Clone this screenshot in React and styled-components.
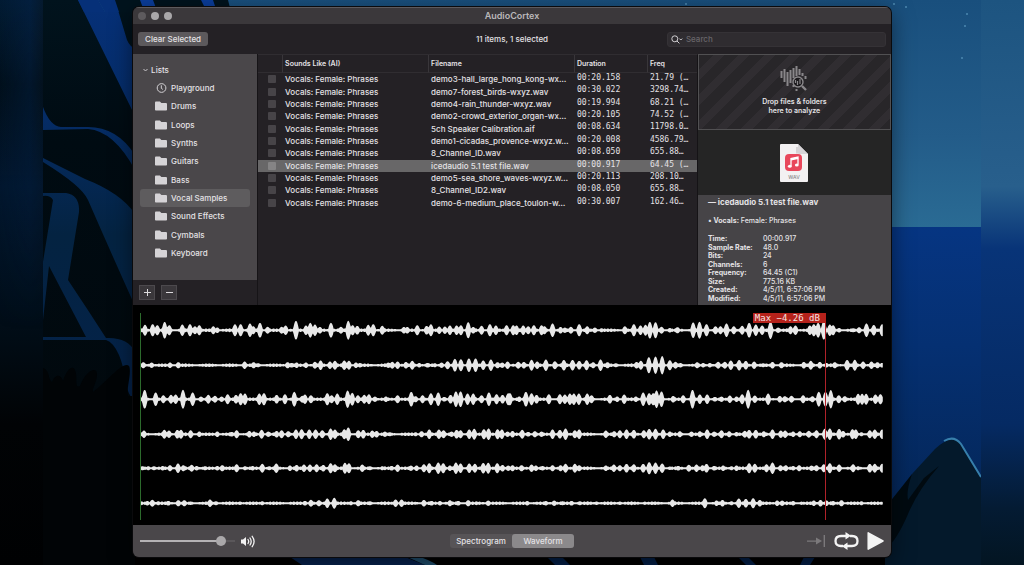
import React, { useState } from 'react';
import styled, { createGlobalStyle } from 'styled-components';
import { FaFolder } from 'react-icons/fa';

const GlobalStyle = createGlobalStyle`
  * { box-sizing: border-box; }
  body {
    margin: 0;
    background: #01060c;
    color: #e4e2e5;
    font-family: Inter, "Liberation Sans", sans-serif;
    font-size: 8px;
    line-height: 12px;
  }
  button, input { font: inherit; color: inherit; margin: 0; }
  button { border: 0; padding: 0; cursor: pointer; }
`;

const lists = ['Playground', 'Drums', 'Loops', 'Synths', 'Guitars', 'Bass', 'Vocal Samples', 'Sound Effects', 'Cymbals', 'Keyboard'];

const files = [
  ['demo3-hall_large_hong_kong-wx…', '00:20.158', '21.79 (…'],
  ['demo7-forest_birds-wxyz.wav', '00:30.022', '3298.74…'],
  ['demo4-rain_thunder-wxyz.wav', '00:19.994', '68.21 (…'],
  ['demo2-crowd_exterior_organ-wx…', '00:20.105', '74.52 (…'],
  ['5ch Speaker Calibration.aif', '00:08.634', '11798.0…'],
  ['demo1-cicadas_provence-wxyz.w…', '00:20.008', '4586.79…'],
  ['8_Channel_ID.wav', '00:08.050', '655.88…'],
  ['icedaudio 5.1 test file.wav', '00:00.917', '64.45 (…'],
  ['demo5-sea_shore_waves-wxyz.w…', '00:20.113', '208.10…'],
  ['8_Channel_ID2.wav', '00:08.050', '655.88…'],
  ['demo-6-medium_place_toulon-w…', '00:30.007', '162.46…'],
];

const details = [
  ['Time:', '00:00.917'],
  ['Sample Rate:', '48.0'],
  ['Bits:', '24'],
  ['Channels:', '6'],
  ['Frequency:', '64.45 (C1)'],
  ['Size:', '775.16 KB'],
  ['Created:', '4/5/11, 6:57:06 PM'],
  ['Modified:', '4/5/11, 6:57:06 PM'],
];

// peaks of each channel as "position:height", two halves per channel
const HALF = 1140;
const channels = [
  ['45:16 68:18 82:15 104:25 118:15 157:17 180:18 195:12 208:15 250:12 262:8 315:18 332:18 360:20 370:12 390:22 413:10 455:10 467:14 498:28 528:14 541:22 555:17 570:10 603:22 633:10 655:28 668:15 682:13 715:16 730:18 757:13 795:4 822:10 832:10 862:15 890:13 903:18 928:11 945:11 960:14 980:14 993:15 1015:24 1030:10 1055:13 1080:18 1098:14 1130:15',
    '10:15 20:14 40:14 55:12 72:15 95:15 104:12 128:20 152:10 165:8 183:10 208:18 232:12 255:8 275:6 345:12 372:18 392:14 407:16 420:25 437:24 455:10 480:7 503:9 550:23 569:25 590:18 617:12 632:12 650:20 672:12 697:13 718:22 738:17 757:14 782:26 805:8 842:12 857:14 900:14 912:18 925:22 942:28 960:17 970:15 988:7 1030:6 1048:9 1070:20 1092:16 1117:18'],
  ['40:9 65:8 120:8 145:9 238:5 290:4 344:11 371:9 385:6 440:4 473:9 485:7 500:8 528:8 555:10 572:14 600:11 615:13 643:14 657:13 678:8 690:7 775:8 787:10 803:11 828:10 847:13 868:7 893:7 915:6 935:8 953:12 975:19 993:18 1017:20 1037:20 1060:14 1083:17 1103:9 1117:8 1133:11',
    '25:10 42:10 65:16 82:11 108:17 135:12 162:16 188:16 208:13 230:15 250:9 272:17 293:9 318:6 380:10 393:13 417:24 437:26 457:27 480:15 497:10 512:7 562:9 580:7 600:7 625:10 645:10 663:14 688:16 708:13 733:11 760:6 788:10 815:9 882:10 903:13 930:10 950:7 975:9 1012:16 1035:16 1060:11 1085:11 1103:9 1117:7'],
  ['44:28 77:20 100:12 123:13 137:14 159:28 188:20 213:8 235:13 255:10 275:8 293:15 318:13 332:18 345:17 388:17 402:18 440:13 465:15 493:22 517:10 525:14 543:12 592:18 605:12 622:17 653:26 667:19 684:12 703:13 717:15 735:8 768:8 803:12 844:22 857:9 878:12 903:18 925:20 943:7 962:13 978:23 992:23 1013:17 1030:17 1055:12 1077:20 1100:15 1118:13 1135:18',
    '0:18 28:8 48:22 65:18 80:13 117:15 150:15 165:14 180:17 192:17 207:17 232:17 245:12 300:13 322:8 343:14 378:8 400:20 418:18 430:18 440:26 455:23 490:10 520:12 548:28 570:14 592:14 615:7 635:8 660:11 680:8 697:15 715:28 735:11 775:17 810:10 825:9 845:10 880:12 908:9 927:22 947:22 963:27 987:12 1005:9 1045:16 1057:16 1069:16 1097:14 1112:15'],
  ['42:11 103:13 117:11 142:13 153:13 182:12 208:8 262:8 305:7 320:12 358:10 372:8 395:13 415:8 440:10 455:12 475:9 498:14 515:15 538:14 557:14 577:12 602:17 615:14 643:15 655:20 685:12 700:13 727:11 740:10 765:8 780:6 857:6 875:9 898:14 927:14 941:12 965:8 980:13 992:12 1018:14 1033:16 1062:15 1076:17 1103:15 1116:14 1133:8',
    '8:10 37:13 55:7 75:9 95:8 128:14 150:13 167:17 195:12 208:14 235:4 288:11 313:9 330:12 350:14 372:13 402:12 418:16 437:16 460:14 480:8 510:9 545:8 570:9 592:14 613:8 635:12 658:9 680:7 705:10 718:13 738:13 762:9 788:14 813:11 826:11 850:8 870:9 897:10 920:12 945:16 960:17 988:16 1000:10 1028:15 1038:14 1055:6 1080:12 1095:14 1117:14'],
  ['38:6 55:6 72:6 98:7 120:9 144:14 160:9 185:10 200:7 225:6 262:7 277:9 320:12 345:6 368:7 397:13 418:6 439:14 480:8 500:10 522:11 540:11 560:12 580:10 602:15 615:12 645:16 657:15 697:11 720:6 757:6 785:7 803:11 843:8 860:8 882:12 898:15 925:17 940:15 960:8 978:17 992:14 1018:14 1035:13 1060:16 1075:16 1102:15 1118:10 1135:8',
    '8:9 35:9 65:11 78:8 98:7 128:9 152:9 167:13 195:13 208:9 288:8 312:11 330:9 350:13 372:12 400:13 418:18 437:17 457:14 480:5 505:7 537:10 560:11 578:9 590:13 613:7 640:8 665:6 680:8 718:15 735:13 770:12 788:17 812:9 828:9 850:7 868:9 905:8 920:9 942:12 960:15 988:11 1030:12 1045:6 1080:13 1095:13 1117:13'],
  ['52:7 67:10 85:6 115:7 145:9 163:9 182:5 240:11 258:6 330:5 397:6 525:7 543:10 567:9 592:14 613:16 663:6 685:9 720:6 755:5 797:11 815:11 860:4 882:10 905:7 930:7 960:9 985:7 1015:9 1040:5 1075:8',
    '20:4 52:7 80:4 108:7 133:8 158:6 185:7 210:6 235:5 260:5 330:5 355:4 405:5 430:4 488:11 585:15 620:8 638:10 665:6 687:14 708:13 730:15 750:10 802:8 817:8 850:7 875:5 912:8 932:10 950:8 970:7 995:9 1055:6 1085:4'],
];

const WAVE_START = 33;
const WAVE_END = 2260;

const wavePath = (halves) => {
  const peaks = halves.flatMap((half, side) =>
    half.split(' ').map((p) => {
      const [x, h] = p.split(':').map(Number);
      return [x + side * HALF, h];
    }));
  const top = [];
  const bottom = [];
  for (let x = WAVE_START; x <= WAVE_END; x += 2) {
    // quiet signal between the peaks
    let h = 2.6 + Math.abs(Math.sin(x * 0.31) * Math.sin(x * 0.047)) * 3;
    peaks.forEach(([px, ph]) => {
      const d = Math.abs(x - px) / 9;
      h = Math.max(h, ph * (1 - d * d));
    });
    top.push(`${x},${-h.toFixed(1)}`);
    bottom.unshift(`${x},${h.toFixed(1)}`);
  }
  return `M${top.join('L')}L${bottom.join('L')}Z`;
};

const Desktop = styled.div`
  position: relative;
  min-height: 100vh;
  padding: 7px 13% 8px;
  overflow: hidden;
`;

const Wallpaper = styled.svg`
  position: absolute;
  inset: 0;
  width: 100%;
  height: 100%;
`;

const Window = styled.main`
  position: relative;
  border-radius: 6px;
  overflow: hidden;
  background: #242125;
  box-shadow: 0 0 0 1px #0a0a0c, 0 6px 22px rgba(0, 0, 0, 0.5);
`;

const TitleBar = styled.header`
  display: grid;
  grid-template-columns: 1fr auto 1fr;
  align-items: center;
  height: 17px;
  padding: 0 5px;
  background: #3b383b;
  border-top: 1px solid #5d5a5d;
`;

const Lights = styled.div`
  display: flex;
  gap: 5px;
`;

const Light = styled.button`
  width: 8px;
  height: 8px;
  border-radius: 50%;
  background: ${(p) => (p.$dim ? '#5e5b5e' : '#a9a7a9')};
`;

const Title = styled.h1`
  margin: 0;
  font-size: 9px;
  font-weight: 600;
  color: #b9b7b9;
`;

const Toolbar = styled.div`
  display: grid;
  grid-template-columns: 1fr auto 1fr;
  align-items: center;
  height: 30px;
  padding: 0 5px;
  font-weight: 500;
`;

const ClearButton = styled.button`
  justify-self: start;
  height: 14px;
  padding: 0 7px;
  border-radius: 3px;
  background: #5c595c;
`;

const Search = styled.label`
  justify-self: end;
  display: flex;
  align-items: center;
  gap: 3px;
  width: 219px;
  height: 15px;
  padding: 0 3px;
  border: 1px solid #353236;
  border-radius: 3px;
  background: #2f2c30;
  svg { width: 12px; height: 9px; flex: none; }
`;

const SearchInput = styled.input`
  flex: 1;
  min-width: 0;
  padding: 0;
  border: 0;
  outline: 0;
  background: none;
  &::placeholder { color: #69666a; }
`;

const Body = styled.div`
  display: grid;
  grid-template-columns: 125px 1fr 193px;
  height: 251px;
`;

const Sidebar = styled.nav`
  display: flex;
  flex-direction: column;
  border-right: 1px solid #161417;
`;

const ListPanel = styled.div`
  flex: 1;
  padding: 9px 7px 0;
  background: #4a474a;
`;

const ListHeading = styled.button`
  display: flex;
  align-items: center;
  gap: 3px;
  height: 14px;
  margin-left: 3px;
  margin-bottom: 2px;
  background: none;
  font-weight: 500;
  svg { width: 5px; height: 4px; }
`;

const Lists = styled.div`
  display: grid;
  grid-auto-rows: 1fr;
  height: 183px;
`;

const ListItem = styled.button`
  display: flex;
  align-items: center;
  gap: 4px;
  padding-left: 15px;
  border-radius: 3px;
  background: ${(p) => (p.$active ? '#5e5c5e' : 'none')};
  font-weight: 500;
  text-align: left;
  svg { width: 12px; height: 12px; color: #d5d3d6; }
`;

const ListActions = styled.div`
  display: flex;
  gap: 6px;
  height: 25px;
  padding: 5px 6px;
  background: #242125;
`;

const SquareButton = styled.button`
  display: grid;
  place-items: center;
  width: 16px;
  height: 15px;
  border: 1px solid #4c494d;
  background: #3a373b;
  svg { width: 7px; height: 7px; }
`;

const TablePanel = styled.section`
  min-width: 0;
  border-top: 1px solid #302d31;
  border-right: 1px solid #151316;
`;

const FileTable = styled.table`
  width: 100%;
  height: 154px;
  table-layout: fixed;
  border-collapse: separate;
  border-spacing: 0;
  th, td {
    padding: 0 0 0 2px;
    text-align: left;
    white-space: nowrap;
    overflow: hidden;
  }
`;

const HeadCell = styled.th`
  width: ${(p) => p.$width || 'auto'};
  height: 18px;
  border-bottom: 1px solid #302d31;
  font-size: 7px;
  font-weight: 600;
  &:not(:first-child) { border-left: 1px solid #39363a; }
`;

const FileRow = styled.tr`
  background: ${(p) => (p.$selected ? '#686768' : 'none')};
`;

const Cell = styled.td`
  padding-left: 3px !important;
  line-height: 12px;
  font-weight: 500;
`;

const MonoCell = styled(Cell)`
  vertical-align: top;
  font-family: "DejaVu Sans Mono", monospace;
  line-height: 9px;
  font-weight: 400;
`;

const TickCell = styled.td`
  padding-left: 10px !important;
`;

const Tick = styled.input`
  display: block;
  appearance: none;
  width: 8px;
  height: 8px;
  border-radius: 1px;
  background: ${(p) => (p.$selected ? '#858485' : '#474448')};
`;

const Inspector = styled.aside`
  display: flex;
  flex-direction: column;
  min-width: 0;
`;

const DropZone = styled.div`
  display: flex;
  flex-direction: column;
  align-items: center;
  height: 76px;
  padding-top: 11px;
  border: 1px solid #515052;
  background: repeating-linear-gradient(135deg, #282629 0 10px, #302d31 10px 18px);
  font-size: 7px;
  line-height: 9px;
  font-weight: 600;
  text-align: center;
  svg { width: 28px; height: 26px; margin-bottom: 5px; }
`;

const Preview = styled.div`
  display: grid;
  place-items: center;
  height: 65px;
  background: #252525;
  svg { width: 28px; height: 38px; }
`;

const Info = styled.div`
  flex: 1;
  padding: 1px 10px 2px;
  background: #464447;
  font-size: 7px;
`;

const InfoTitle = styled.h2`
  margin: 0 0 7px;
  font-size: 8px;
  line-height: 12px;
  font-weight: 700;
`;

const InfoTags = styled.p`
  margin: 0 0 8px;
  line-height: 12px;
  font-weight: 500;
`;

const Details = styled.dl`
  display: grid;
  grid-template-columns: 55px 1fr;
  grid-auto-rows: 1fr;
  height: 68px;
  margin: 0;
  line-height: 8px;
  dt { font-weight: 700; }
  dd { margin: 0; font-weight: 500; }
`;

const WavePanel = styled.section`
  height: 220px;
  padding: 8px 7px 5px;
  background: #000;
`;

const Tracks = styled.div`
  position: relative;
  display: grid;
  grid-auto-rows: 1fr;
  height: 100%;
  border-left: 1px solid #2c6a2c;
`;

const Track = styled.svg`
  width: 100%;
  height: 100%;
  fill: #e8e8e8;
`;

const Marker = styled.div`
  position: absolute;
  top: 0;
  bottom: 0;
  right: 58px;
  width: 1px;
  background: #b0222a;
`;

const MarkerLabel = styled.span`
  position: absolute;
  top: 0;
  right: 0;
  height: 10px;
  padding: 0 6px 0 2px;
  background: #b5221b;
  color: #f6e4e3;
  font-family: "DejaVu Sans Mono", monospace;
  font-size: 9px;
  line-height: 10px;
  white-space: nowrap;
`;

const Footer = styled.footer`
  display: grid;
  grid-template-columns: 1fr auto 1fr;
  align-items: center;
  height: 32px;
  padding: 0 7px;
  background: #4a474a;
`;

const Volume = styled.label`
  display: flex;
  align-items: center;
  gap: 5px;
  svg { width: 16px; height: 13px; }
`;

const VolumeSlider = styled.input`
  appearance: none;
  width: 95px;
  height: 10px;
  background: linear-gradient(90deg, #b4b2b4 84%, #5a575a 84%) center / 100% 2px no-repeat;
  &::-webkit-slider-thumb {
    appearance: none;
    width: 10px;
    height: 10px;
    border-radius: 50%;
    background: #aaa8aa;
  }
`;

const Segmented = styled.div`
  display: flex;
  height: 14px;
  border-radius: 3px;
  background: #575457;
`;

const Segment = styled.button`
  width: 62px;
  border-radius: 3px;
  background: ${(p) => (p.$active ? '#8b898b' : 'none')};
  font-weight: 500;
`;

const Transport = styled.div`
  justify-self: end;
  display: flex;
  align-items: center;
  gap: 8px;
`;

const TransportButton = styled.button`
  display: block;
  background: none;
  color: ${(p) => (p.$dim ? '#7b797b' : '#f4f4f4')};
  svg { display: block; width: ${(p) => p.$width}px; height: 20px; }
`;

const Scenery = () => (
  <Wallpaper viewBox="0 0 1024 565" preserveAspectRatio="none" aria-hidden="true">
    <defs>
      <linearGradient id="left" x1="0" y1="0" x2="0" y2="1">
        <stop offset="0" stopColor="#021a30" />
        <stop offset="0.15" stopColor="#010e18" />
        <stop offset="0.33" stopColor="#02162d" />
        <stop offset="0.6" stopColor="#010c15" />
        <stop offset="0.75" stopColor="#010305" />
        <stop offset="1" stopColor="#000102" />
      </linearGradient>
      <linearGradient id="leftGlow">
        <stop offset="0" stopColor="#04244c" stopOpacity="0.1" />
        <stop offset="0.7" stopColor="#04244c" stopOpacity="0.5" />
        <stop offset="1" stopColor="#0a1a2c" stopOpacity="0.4" />
      </linearGradient>
      <linearGradient id="glowFade" x1="0" y1="0" x2="0" y2="1">
        <stop offset="0" stopColor="#fff" />
        <stop offset="0.5" stopColor="#888" />
        <stop offset="1" stopColor="#000" />
      </linearGradient>
      <mask id="glowMask"><rect width="43" height="330" fill="url(#glowFade)" /></mask>
      <linearGradient id="art" gradientUnits="userSpaceOnUse" x1="0" y1="0" x2="0" y2="565">
        <stop offset="0" stopColor="#01131d" />
        <stop offset="0.25" stopColor="#000b12" />
        <stop offset="0.7" stopColor="#01090e" />
        <stop offset="0.8" stopColor="#010305" />
        <stop offset="1" stopColor="#000" />
      </linearGradient>
      <linearGradient id="branch" gradientUnits="userSpaceOnUse" x1="0" y1="0" x2="0" y2="470">
        <stop offset="0" stopColor="#063078" />
        <stop offset="0.25" stopColor="#052c66" />
        <stop offset="0.5" stopColor="#042341" />
        <stop offset="0.85" stopColor="#04224a" />
        <stop offset="1" stopColor="#063272" />
      </linearGradient>
      <linearGradient id="sky" gradientUnits="userSpaceOnUse" x1="0" y1="0" x2="0" y2="228">
        <stop offset="0" stopColor="#194f7d" />
        <stop offset="0.6" stopColor="#235c89" />
        <stop offset="1" stopColor="#2a6b94" />
      </linearGradient>
      <linearGradient id="sea" x1="0" y1="0" x2="0" y2="1">
        <stop offset="0" stopColor="#063582" />
        <stop offset="0.35" stopColor="#053072" />
        <stop offset="1" stopColor="#04234f" />
      </linearGradient>
      <linearGradient id="edge" x1="0" y1="0" x2="0" y2="1">
        <stop offset="0" stopColor="#1d5480" />
        <stop offset="0.33" stopColor="#285f8c" />
        <stop offset="0.44" stopColor="#083478" />
        <stop offset="0.75" stopColor="#052a63" />
        <stop offset="0.9" stopColor="#041b33" />
        <stop offset="1" stopColor="#031522" />
      </linearGradient>
    </defs>
    <rect x="43" width="948" height="565" fill="url(#art)" />
    <g fill="url(#branch)">
      <path d="M78 0H115L127 40Q130 47 135 48V116Z" />
      <path d="M43 107Q50 126 61 127H88Q117 127 135 155V170Q114 131 88 129L43 130Z" />
      <path d="M43 158L85 179Q121 193 135 214V306Q112 255 88 200Q82 186 43 162Z" />
      <path d="M43 193H66Q80 195 79 212L68 280Q88 310 106 338Q128 337 135 352V400Q130 398 127 388Q121 345 106 340H43V337H86L49 266L43 320V262L53 200Q50 195 43 196Z" />
      <path d="M108 447Q124 450 135 461V466Q120 459 108 449Z" />
    </g>
    <path d="M43 368C50 370 48 380 52 382C56 373 61 375 63 381C68 366 75 364 76 374C77 382 75 388 80 386C86 370 97 366 97 374C97 382 92 388 93 392C108 380 124 360 129 366C132 372 126 390 128 396L135 396V565H43Z" fill="#010406" />
    <path d="M98 0H991V12H100Z" fill="url(#sky)" />
    <path d="M78 0H98L105 12H84Z" fill="#063078" />
    <path d="M98 0H130V12H105Z" fill="#063078" />
    <path d="M115 0H206V12H119Z" fill="#01131d" />
    <path d="M140 0H153L156 8H143ZM201 0H213L218 8H205Z" fill="#0a3d9a" />
    <path d="M213 0H228L231 12H217Z" fill="#01131d" />
    <rect x="885" width="96" height="228" fill="url(#sky)" />
    <rect x="885" y="227" width="96" height="338" fill="url(#sea)" />
    <path d="M885 520L912 474L935 449Q951 434 960 442L981 478V565H885Z" fill="#04192b" />
    <path d="M885 508L912 474Q906 491 908 500L924 478L939 466Q918 490 908 514Q897 540 885 550Z" fill="#010a10" />
    <path d="M944 441Q954 435 961 444L981 477" fill="none" stroke="#377fab" strokeWidth="2" />
    <path d="M290 557H405L425 565H302Z" fill="#072350" />
    <path d="M405 556H417Q430 560 437 565H425Z" fill="#205070" />
    <path d="M547 557H562L570 565H555ZM640 557H654L658 565H644ZM738 557H748L756 565H746ZM804 557H815L810 565H800Z" fill="#04204a" />
    <g fill="#4c88b0">
      <circle cx="894" cy="4" r="1" /><circle cx="906" cy="7" r="1" />
      <circle cx="967" cy="14" r="1" /><circle cx="965" cy="26" r="1" />
      <circle cx="962" cy="58" r="1" /><circle cx="686" cy="4" r="1" />
    </g>
    <rect width="43" height="565" fill="url(#left)" />
    <rect width="43" height="330" fill="url(#leftGlow)" mask="url(#glowMask)" />
    <rect x="981" width="43" height="565" fill="url(#edge)" />
  </Wallpaper>
);

const ClockIcon = () => (
  <svg viewBox="0 0 11 11" fill="none" stroke="currentColor">
    <circle cx="6" cy="5.5" r="4" strokeWidth="0.9" />
    <path d="M5.8 3V5.8L7.2 6.8" strokeWidth="0.9" />
  </svg>
);

const AnalyzeIcon = () => (
  <svg viewBox="0 0 28 26" fill="none" stroke="#89878a">
    <path d="M1.5 5V12M4.5 3V16M7.5 6V20M10.5 4V17M13.5 2V12M16.5 0V10M19.5 3V9M22.5 7V10M25.5 10V13M13.5 19V21M16.5 23V25" strokeWidth="2" />
    <circle cx="18" cy="16" r="5" strokeWidth="1.4" fill="#1c1a1d" />
    <path d="M22 20L26 24" strokeWidth="2.4" />
    <path d="M15.5 14V17M17.5 15V19M20 13V18" strokeWidth="1.2" />
  </svg>
);

const WavFileIcon = () => (
  <svg viewBox="0 0 28 38">
    <path d="M1 0H18L28 10V37Q28 38 27 38H1Q0 38 0 37V1Q0 0 1 0Z" fill="#f3f1f2" />
    <path d="M18 0L28 10H19Q18 10 18 9Z" fill="#d6d4d7" />
    <path d="M17 3V9.5" stroke="#a9a7aa" strokeWidth="0.8" />
    <rect x="5" y="10" width="17" height="17" rx="4" fill="#e8475b" />
    <path d="M11 22V14.5L18 13V20.5" fill="none" stroke="#fff" strokeWidth="1.3" />
    <path d="M11 15.5L18 14" stroke="#fff" strokeWidth="2" />
    <ellipse cx="9.8" cy="22.3" rx="1.9" ry="1.5" fill="#fff" />
    <ellipse cx="16.8" cy="20.9" rx="1.9" ry="1.5" fill="#fff" />
    <text x="14" y="34.5" textAnchor="middle" fontSize="5" fontWeight="500" fill="#8b898b">WAV</text>
  </svg>
);

const App = () => {
  const [list, setList] = useState('Vocal Samples');
  const [selected, setSelected] = useState(7);
  const [view, setView] = useState('Waveform');

  return (
    <>
      <GlobalStyle />
      <Desktop>
        <Scenery />
        <Window>
          <TitleBar>
            <Lights>
              <Light $dim aria-label="Close" />
              <Light aria-label="Minimize" />
              <Light aria-label="Zoom" />
            </Lights>
            <Title>AudioCortex</Title>
          </TitleBar>

          <Toolbar>
            <ClearButton>Clear Selected</ClearButton>
            <span>11 items, 1 selected</span>
            <Search>
              <svg viewBox="0 0 12 9" fill="none" stroke="#d0ced1">
                <circle cx="3.8" cy="3.8" r="3" />
                <path d="M6 6L8.4 8.4M8.4 3.6L9.8 5L11.2 3.6" />
              </svg>
              <SearchInput type="search" placeholder="Search" aria-label="Search" />
            </Search>
          </Toolbar>

          <Body>
            <Sidebar>
              <ListPanel>
                <ListHeading>
                  <svg viewBox="0 0 5 4" fill="none" stroke="#c9c7ca"><path d="M0.5 1L2.5 3L4.5 1" /></svg>
                  Lists
                </ListHeading>
                <Lists>
                  {lists.map((name) => (
                    <ListItem key={name} $active={name === list} onClick={() => setList(name)}>
                      {name === 'Playground' ? <ClockIcon /> : <FaFolder />}
                      {name}
                    </ListItem>
                  ))}
                </Lists>
              </ListPanel>
              <ListActions>
                <SquareButton aria-label="Add list">
                  <svg viewBox="0 0 7 7" stroke="#dddbde"><path d="M0 3.5H7M3.5 0V7" /></svg>
                </SquareButton>
                <SquareButton aria-label="Remove list">
                  <svg viewBox="0 0 7 7" stroke="#dddbde"><path d="M0 3.5H7" /></svg>
                </SquareButton>
              </ListActions>
            </Sidebar>

            <TablePanel>
              <FileTable>
                <thead>
                  <tr>
                    <HeadCell $width="24px" />
                    <HeadCell $width="146px">Sounds Like (AI)</HeadCell>
                    <HeadCell>Filename</HeadCell>
                    <HeadCell $width="73px">Duration</HeadCell>
                    <HeadCell $width="50px">Freq</HeadCell>
                  </tr>
                </thead>
                <tbody>
                  {files.map(([name, duration, freq], i) => (
                    <FileRow key={name} $selected={i === selected} onClick={() => setSelected(i)}>
                      <TickCell><Tick type="checkbox" $selected={i === selected} aria-label={name} /></TickCell>
                      <Cell>Vocals: Female: Phrases</Cell>
                      <Cell>{name}</Cell>
                      <MonoCell>{duration}</MonoCell>
                      <MonoCell>{freq}</MonoCell>
                    </FileRow>
                  ))}
                </tbody>
              </FileTable>
            </TablePanel>

            <Inspector>
              <DropZone>
                <AnalyzeIcon />
                <div>Drop files &amp; folders<br />here to analyze</div>
              </DropZone>
              <Preview><WavFileIcon /></Preview>
              <Info>
                <InfoTitle>— icedaudio 5.1 test file.wav</InfoTitle>
                <InfoTags>• <b>Vocals:</b> Female: Phrases</InfoTags>
                <Details>
                  {details.map(([label, value]) => (
                    <React.Fragment key={label}>
                      <dt>{label}</dt>
                      <dd>{value}</dd>
                    </React.Fragment>
                  ))}
                </Details>
              </Info>
            </Inspector>
          </Body>

          <WavePanel>
            <Tracks>
              {channels.map((halves, i) => (
                <Track key={i} viewBox="33 -51 2229 102" preserveAspectRatio="none">
                  <path d={wavePath(halves)} />
                </Track>
              ))}
              <Marker><MarkerLabel>Max −4.26 dB</MarkerLabel></Marker>
            </Tracks>
          </WavePanel>

          <Footer>
            <Volume>
              <VolumeSlider type="range" defaultValue="89" aria-label="Volume" />
              <svg viewBox="0 0 16 13" fill="none" stroke="#f2f2f2" strokeWidth="1.3" strokeLinecap="round">
                <path d="M1 4.5H3L6 2V11L3 8.5H1Z" fill="#f2f2f2" stroke="none" />
                <path d="M8 4.5Q9.4 6.5 8 8.5M10 3Q12.4 6.5 10 10M12.2 1.3Q16 6.5 12.2 11.7" />
              </svg>
            </Volume>
            <Segmented>
              {['Spectrogram', 'Waveform'].map((name) => (
                <Segment key={name} $active={name === view} aria-pressed={name === view} onClick={() => setView(name)}>
                  {name}
                </Segment>
              ))}
            </Segmented>
            <Transport>
              <TransportButton $dim $width={19} aria-label="Skip to end">
                <svg viewBox="0 0 19 20" fill="currentColor">
                  <path d="M0 9.4H9V6.5L15 10L9 13.5V10.8H0ZM16.6 4H18V16H16.6Z" />
                </svg>
              </TransportButton>
              <TransportButton $width={25} aria-label="Loop">
                <svg viewBox="0 0 25 20" fill="none" stroke="currentColor" strokeWidth="2.3">
                  <path d="M9 15H7Q1.5 15 1.5 10Q1.5 5 7 5H12M16 5H18Q23.5 5 23.5 10Q23.5 15 18 15H13" />
                  <path d="M11.5 1L17 4.8L11.5 8.6ZM13.5 11.4L8 15.2L13.5 19Z" fill="currentColor" stroke="none" />
                </svg>
              </TransportButton>
              <TransportButton $width={17} aria-label="Play">
                <svg viewBox="0 0 17 20" fill="currentColor" stroke="currentColor" strokeWidth="1.5" strokeLinejoin="round">
                  <path d="M1.2 1.8L16 10L1.2 18.2Z" />
                </svg>
              </TransportButton>
            </Transport>
          </Footer>
        </Window>
      </Desktop>
    </>
  );
};

export default App;
